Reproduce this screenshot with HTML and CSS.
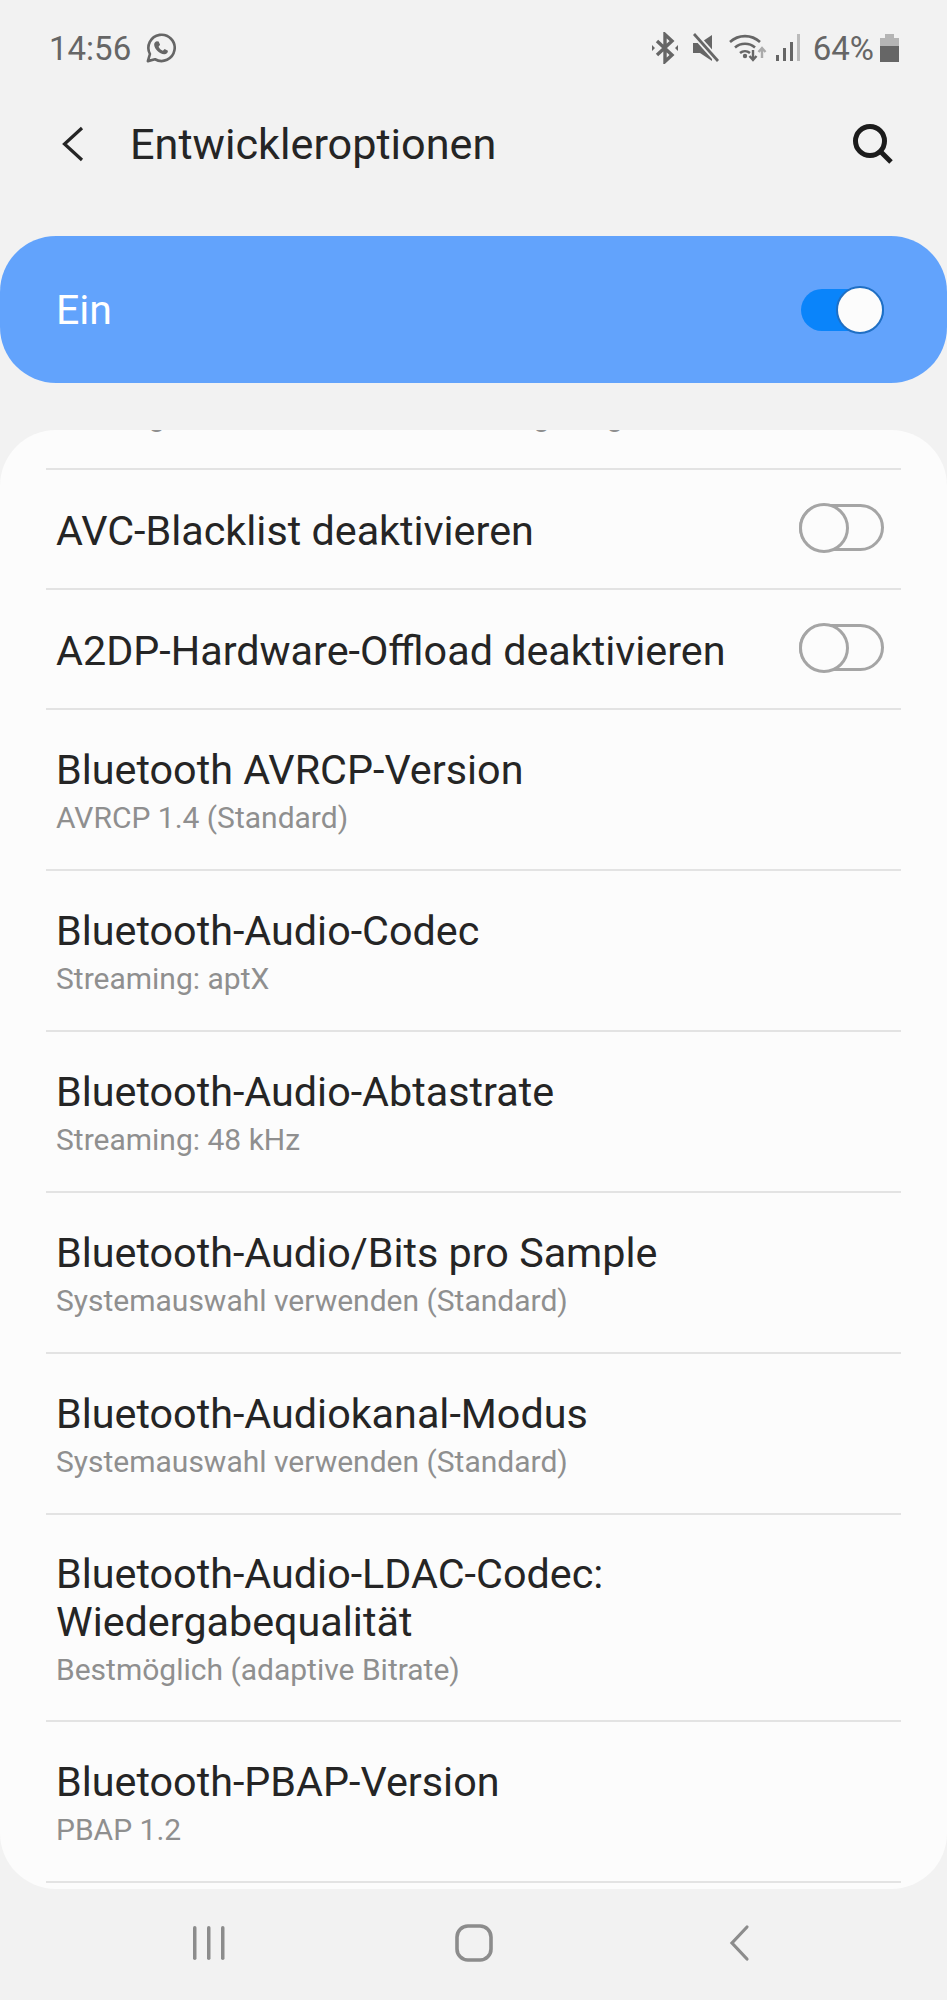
FILE: index.html
```html
<!DOCTYPE html>
<html lang="de">

<head>
  <meta charset="UTF-8">
  <meta name="viewport" content="width=device-width, initial-scale=1.0">
  <title>Entwickleroptionen</title>
  <link rel="stylesheet" href="styles.css">
</head>

<body>
  <div class="status">
    <span class="time">14:56</span>
    <svg class="wa" width="30" height="30" viewBox="0 0 32 32" fill="none">
      <path d="M2 30l2.200-7.600A14 14 0 1 1 9.600 28z" stroke="#666" stroke-width="2.800" stroke-linejoin="round"/>
      <path d="M11.500 8.800l2 .2 1.500 3.600-1.600 2c1 2 2.500 3.400 4.600 4.400l1.900-1.900 3.500 1.700c0 2.400-1.700 3.900-4 3.800-5-.5-10.500-5.800-10.700-10.200 0-1.600 1-3 2.800-3.600z" fill="#666"/>
    </svg>
    <div class="status-right">
      <svg width="26" height="32" viewBox="0 0 26 32" fill="none" stroke="#666" stroke-width="3.400">
        <path d="M5 9l15 14-7 6.500V2.500L20 9 5 23"/>
        <path d="M0 13l3 3-3 3zM26 13l-3 3 3 3z" fill="#666" stroke="none"/>
      </svg>
      <svg class="gap-a" width="26" height="30" viewBox="0 0 26 30">
        <path d="M0 10h7L19 2v26L7 20H0z" fill="#666"/>
        <path d="M0 0l26 29" stroke="#f2f2f2" stroke-width="6.500"/>
        <path d="M1 1l24 27" stroke="#666" stroke-width="2.800"/>
      </svg>
      <svg class="gap-b" width="38" height="30" viewBox="0 0 38 30" fill="none">
        <path d="M1 9a22 22 0 0 1 30 0M6 14.500a15 15 0 0 1 20 0M11 20a8 8 0 0 1 10 0" stroke="#666" stroke-width="2.600"/>
        <circle cx="16" cy="23" r="2.200" fill="#666"/>
        <path d="M24 17v9M20.500 23l3.500 4 3.500-4" stroke="#666" stroke-width="2.400"/>
        <path d="M33 25v-9M29.500 19l3.500-4 3.500 4" stroke="#aaa" stroke-width="2.400"/>
      </svg>
      <svg class="gap-c" width="25" height="28" viewBox="0 0 25 28">
        <rect x="0" y="21" width="3" height="6" fill="#666"/>
        <rect x="7" y="14" width="3" height="13" fill="#666"/>
        <rect x="14" y="8" width="3" height="19" fill="#666"/>
        <rect x="21" y="0" width="3" height="27" fill="#bbb"/>
      </svg>
      <span class="batt-text">64%</span>
      <div class="batt">
        <div class="batt-cap"></div>
        <div class="batt-body"></div>
      </div>
    </div>
  </div>

  <div class="appbar">
    <svg class="back" width="26" height="40" viewBox="0 0 26 40" fill="none">
      <path d="M22 4L4.500 20 22 36" stroke="#252525" stroke-width="3.200"/>
    </svg>
    <h1 class="title">Entwickleroptionen</h1>
    <svg class="search" width="44" height="44" viewBox="0 0 44 44" fill="none">
      <circle cx="19" cy="19" r="14.500" stroke="#1c1c1c" stroke-width="5"/>
      <path d="M29.500 29.500L40 40" stroke="#1c1c1c" stroke-width="5"/>
    </svg>
  </div>

  <div class="master">
    <span>Ein</span>
    <div class="switch on"><div class="knob"></div></div>
  </div>

  <div class="card">
    <div class="row cut">
      <div class="row-sub">Wirkung bei zu hoher Lautst&auml;rke: Regelung</div>
    </div>
    <div class="row single">
      <div class="row-title">AVC-Blacklist deaktivieren</div>
      <div class="switch"><div class="knob"></div></div>
    </div>
    <div class="row single">
      <div class="row-title">A2DP-Hardware-Offload deaktivieren</div>
      <div class="switch"><div class="knob"></div></div>
    </div>
    <div class="row">
      <div class="row-title">Bluetooth AVRCP-Version</div>
      <div class="row-sub">AVRCP 1.4 (Standard)</div>
    </div>
    <div class="row">
      <div class="row-title">Bluetooth-Audio-Codec</div>
      <div class="row-sub">Streaming: aptX</div>
    </div>
    <div class="row">
      <div class="row-title">Bluetooth-Audio-Abtastrate</div>
      <div class="row-sub">Streaming: 48 kHz</div>
    </div>
    <div class="row">
      <div class="row-title">Bluetooth-Audio/Bits pro Sample</div>
      <div class="row-sub">Systemauswahl verwenden (Standard)</div>
    </div>
    <div class="row">
      <div class="row-title">Bluetooth-Audiokanal-Modus</div>
      <div class="row-sub">Systemauswahl verwenden (Standard)</div>
    </div>
    <div class="row tall">
      <div class="row-title">Bluetooth-Audio-LDAC-Codec:<br>Wiedergabequalit&auml;t</div>
      <div class="row-sub">Bestm&ouml;glich (adaptive Bitrate)</div>
    </div>
    <div class="row">
      <div class="row-title">Bluetooth-PBAP-Version</div>
      <div class="row-sub">PBAP 1.2</div>
    </div>
  </div>

  <div class="navbar">
    <svg width="34" height="36" viewBox="0 0 34 36" fill="#8c8c8c">
      <rect x="1" y="1" width="3.500" height="34" rx="1.750"/>
      <rect x="15" y="1" width="3.500" height="34" rx="1.750"/>
      <rect x="29" y="1" width="3.500" height="34" rx="1.750"/>
    </svg>
    <svg width="38" height="38" viewBox="0 0 38 38" fill="none">
      <rect x="2" y="2" width="34" height="34" rx="11" stroke="#8c8c8c" stroke-width="3.600"/>
    </svg>
    <svg width="24" height="38" viewBox="0 0 24 38" fill="none">
      <path d="M20 3L5 19l15 16" stroke="#8c8c8c" stroke-width="3.200" stroke-linecap="round"/>
    </svg>
  </div>
</body>

</html>
```

FILE: styles.css
```css
html {
  background-color: #f2f2f2;
}

body {
  margin: 0;
  height: 2000px;
  overflow: hidden;
  font-family: Roboto, "Liberation Sans", sans-serif;
  color: #252525;
}

.status {
  display: flex;
  align-items: center;
  height: 96px;
  padding: 0 48px 0 49px;
  color: #666;
}

.time {
  font-size: 33px;
  margin-right: 15px;
}

.status-right {
  display: flex;
  align-items: center;
  margin-left: auto;
}

.gap-a { margin-left: 15px; }
.gap-b { margin-left: 10px; }
.gap-c { margin-left: 9px; }

.batt-text {
  font-size: 33px;
  margin-left: 12px;
}

.batt {
  width: 19px;
  margin-left: 6px;
  display: flex;
  flex-direction: column;
  align-items: center;
}

.batt-cap {
  width: 9px;
  height: 4px;
  background-color: #b5b5b5;
}

.batt-body {
  width: 19px;
  height: 24px;
  background: linear-gradient(#b5b5b5 35%, #666 35%);
}

.appbar {
  display: flex;
  align-items: center;
  height: 96px;
  padding: 0 52px 0 60px;
}

.title {
  margin: 0 0 0 44px;
  font-size: 43.200px;
  font-weight: 400;
}

.search {
  margin-left: auto;
}

.master {
  display: flex;
  align-items: center;
  justify-content: space-between;
  height: 147px;
  margin-top: 44px;
  padding: 0 63px 0 56px;
  border-radius: 56px;
  background-color: #62a3fc;
  color: #fff;
  font-size: 41px;
}

.switch {
  position: relative;
  width: 85px;
  height: 47px;
  margin-bottom: 6px;
  box-sizing: border-box;
  border: 3px solid #a5a5a5;
  border-radius: 24px;
}

.knob {
  position: absolute;
  top: -4px;
  left: -3px;
  width: 50px;
  height: 50px;
  box-sizing: border-box;
  border: 3px solid #a5a5a5;
  border-radius: 50%;
  background-color: #fcfcfc;
}

.switch.on {
  width: 83px;
  height: 42px;
  margin-bottom: 0;
  border: 0;
  background-color: #0a84fa;
}

.switch.on .knob {
  top: -3px;
  left: 35px;
  width: 48px;
  height: 48px;
  border: 2px solid #1f6fc4;
}

.card {
  height: 1459px;
  margin-top: 47px;
  overflow: hidden;
  border-radius: 56px;
  background-color: #fcfcfc;
}

.row {
  display: flex;
  flex-direction: column;
  justify-content: center;
  box-sizing: border-box;
  height: 161px;
  margin: 0 46px;
  padding: 3px 10px 0;
  border-bottom: 2px solid #e3e3e3;
}

.row.tall {
  height: 207px;
}

.row.single {
  flex-direction: row;
  align-items: center;
  justify-content: space-between;
  height: 120px;
  padding-right: 17px;
}

.row.cut {
  justify-content: flex-end;
  height: 40px;
  padding: 0 10px 34px;
}

.row-title {
  font-size: 41.300px;
  line-height: 48px;
}

.row-sub {
  margin-top: 6px;
  font-size: 30px;
  line-height: 36px;
  color: #8f8f8f;
  white-space: nowrap;
}

.navbar {
  display: grid;
  grid-template-columns: repeat(3, 265px);
  justify-content: center;
  justify-items: center;
  align-items: center;
  height: 108px;
}
```
